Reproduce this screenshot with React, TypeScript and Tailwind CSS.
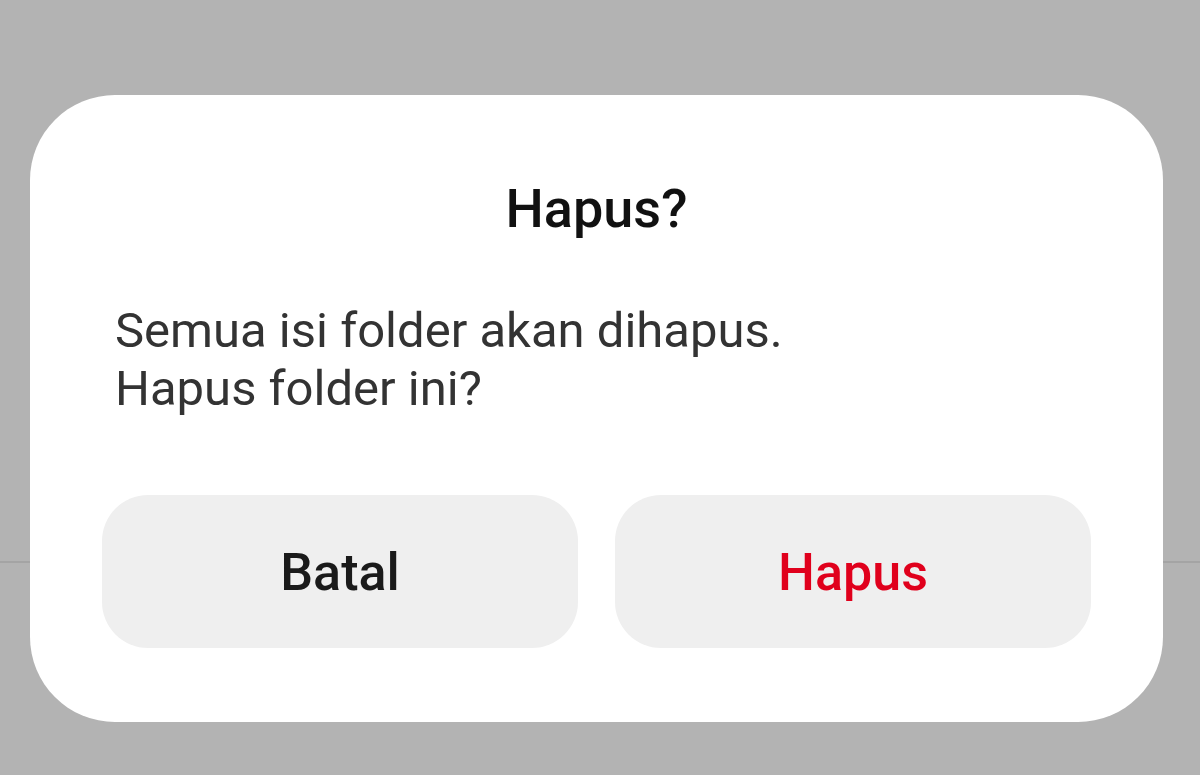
import React from "react";

export default function App() {
  return (
    <div className="relative h-[775px] w-full overflow-hidden bg-[#b3b3b3] font-['Roboto',sans-serif]">
      {/* page behind the dialog */}
      <div className="h-[563px] border-b-2 border-[#a4a4a4]" />

      {/* dialog */}
      <div className="absolute left-[30px] top-[95px] flex h-[627px] w-[1133px] flex-col rounded-[85px] bg-white px-[72px] pt-[84px] pb-[74px]">
        <h2 className="text-center text-[54px] leading-[60px] font-medium text-[#111111]">Hapus?</h2>
        <p className="mt-[63px] pl-[13px] text-[49px] leading-[58px] text-[#333333]">
          Semua isi folder akan dihapus.
          <br />
          Hapus folder ini?
        </p>
        <div className="mt-auto flex gap-[37px]">
          <button className="flex h-[153px] flex-1 items-center justify-center rounded-[46px] bg-[#efefef] pt-[3px] text-[52px] font-medium text-[#1a1a1a]">
            Batal
          </button>
          <button className="flex h-[153px] flex-1 items-center justify-center rounded-[46px] bg-[#efefef] pt-[3px] text-[52px] font-medium text-[#e0001c]">
            Hapus
          </button>
        </div>
      </div>
    </div>
  );
}
